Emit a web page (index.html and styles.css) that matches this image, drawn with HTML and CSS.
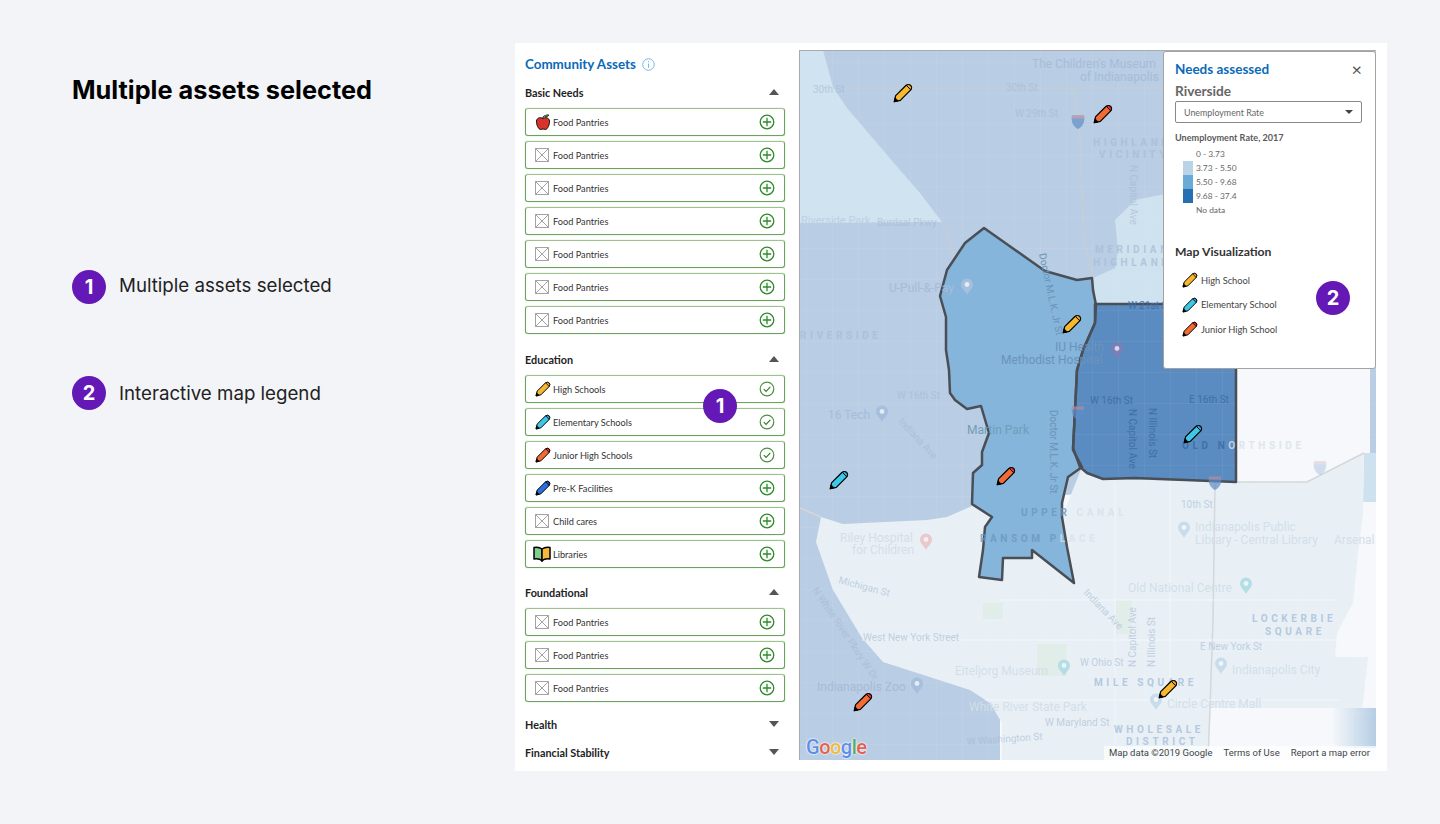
FILE: index.html
```html
<!DOCTYPE html>
<html>
<head>
	<meta charset="utf-8">
	<title>Multiple assets selected</title>
	<link rel="stylesheet" href="styles.css">
</head>
<body>

<svg class="defs" width="0" height="0">
	<symbol id="pencil" viewBox="0 0 24 24">
		<path d="M1.500 22.500 L3.200 15.200 L15.500 3 Q18.500 .8 21.300 3 Q23.300 5.800 21 8.500 L8.800 20.800 Z" fill="currentColor" stroke="#000" stroke-width="1.500" stroke-linejoin="round"/>
		<path d="M16 2.700 Q18.500 .8 21.300 3 Q23.300 5.800 21.200 8.200 Z" fill="var(--cap)" stroke="#000" stroke-width="1.200" stroke-linejoin="round"/>
		<path d="M1.500 22.500 L2.500 17.800 L6.200 21.500 Z" fill="#000" stroke="#000"/>
	</symbol>
	<symbol id="noimg" viewBox="0 0 16 16">
		<path d="M.5 1.500h13v13H.5z M.5 1.500l13 13 M13.500 1.500l-13 13" fill="#fff" stroke="#999" stroke-width=".9"/>
	</symbol>
	<symbol id="apple" viewBox="0 0 16 16">
		<path d="M8 4.500 C6 3 2 3.300 1.500 7 C1.200 10.500 3.500 15.500 5.500 15.500 C6.800 15.500 7 15 8 15 C9 15 9.200 15.500 10.500 15.500 C12.500 15.500 14.800 10.500 14.500 7 C14 3.300 10 3 8 4.500 Z" fill="#d8322c" stroke="#000" stroke-width=".9"/>
		<path d="M8 4.500 C8 3 8.500 2 9.500 1.500" fill="none" stroke="#000" stroke-width="1"/>
		<path d="M9.500 2.500 C10.500 .8 12.500 .6 14 1 C13.200 2.600 11.200 3.400 9.500 2.500 Z" fill="#4d9a3a" stroke="#000" stroke-width=".6"/>
	</symbol>
	<symbol id="book" viewBox="0 0 18 16">
		<path d="M9 3 C7 1.500 4 1 1 1.500 V13 C4 12.500 7 13 9 14.500 Z" fill="#7fce8a" stroke="#000" stroke-width="1.500" stroke-linejoin="round"/>
		<path d="M9 3 C11 1.500 14 1 17 1.500 V13 C14 12.500 11 13 9 14.500 Z" fill="#f5b83d" stroke="#000" stroke-width="1.500" stroke-linejoin="round"/>
		<path d="M7.800 14.500 L9 15.800 L10.200 14.500" fill="#000" stroke="#000" stroke-width=".8"/>
	</symbol>
	<symbol id="plus" viewBox="0 0 16 16">
		<circle cx="8" cy="8" r="6.800" fill="none" stroke="#2f8a2a" stroke-width="1.300"/>
		<path d="M8 3.800v8.400M3.800 8h8.400" fill="none" stroke="#2f8a2a" stroke-width="1.300"/>
	</symbol>
	<symbol id="check" viewBox="0 0 16 16">
		<circle cx="8" cy="8" r="6.800" fill="none" stroke="#4f8f45" stroke-width="1.200"/>
		<path d="M4.800 8.200l2.300 2.300 4.200-4.600" fill="none" stroke="#3d7a35" stroke-width="1.200"/>
	</symbol>
	<symbol id="mark" viewBox="0 0 14 18">
		<path d="M7 17 C5 13 1 10.500 1 6.500 A6 6 0 0 1 13 6.500 C13 10.500 9 13 7 17 Z" fill="currentColor"/>
		<circle cx="7" cy="6.500" r="2.400" fill="#fff" opacity=".7"/>
	</symbol>
	<symbol id="shield" viewBox="0 0 14 16">
		<path d="M1 1.500 H13 C14 7 12.500 12.500 7 15 C1.500 12.500 0 7 1 1.500 Z" fill="#5f8fc9"/>
		<path d="M1 1.500 H13 L13.300 4.500 H.7 Z" fill="#b98c9c"/>
	</symbol>
</svg>

<div class="page">

	<div class="notes">
		<h1>Multiple assets selected</h1>
		<div class="note note-first"><span class="badge">1</span><span class="note-up">Multiple assets selected</span></div>
		<div class="note"><span class="badge">2</span>Interactive map legend</div>
	</div>

	<div class="frame">

		<div class="side">
			<div class="side-title">Community Assets
				<svg class="info" viewBox="0 0 14 14"><circle cx="7" cy="7" r="6.200" fill="none" stroke="#6db0e2"/><path d="M7 3.400v1.200M7 6v4.600" stroke="#6db0e2" fill="none"/></svg>
			</div>

			<div class="sect sect-first">
				<div class="sect-head">Basic Needs <span class="caret"></span></div>
				<ul class="assets">
					<li><svg class="ico"><use href="#apple"/></svg>Food Pantries<svg class="act"><use href="#plus"/></svg></li>
					<li><svg class="ico"><use href="#noimg"/></svg>Food Pantries<svg class="act"><use href="#plus"/></svg></li>
					<li><svg class="ico"><use href="#noimg"/></svg>Food Pantries<svg class="act"><use href="#plus"/></svg></li>
					<li><svg class="ico"><use href="#noimg"/></svg>Food Pantries<svg class="act"><use href="#plus"/></svg></li>
					<li><svg class="ico"><use href="#noimg"/></svg>Food Pantries<svg class="act"><use href="#plus"/></svg></li>
					<li><svg class="ico"><use href="#noimg"/></svg>Food Pantries<svg class="act"><use href="#plus"/></svg></li>
					<li><svg class="ico"><use href="#noimg"/></svg>Food Pantries<svg class="act"><use href="#plus"/></svg></li>
				</ul>
			</div>

			<div class="sect sect-edu">
				<div class="sect-head">Education <span class="caret"></span></div>
				<ul class="assets">
					<li><svg class="ico c-yellow"><use href="#pencil"/></svg>High Schools<svg class="act"><use href="#check"/></svg></li>
					<li><svg class="ico c-cyan"><use href="#pencil"/></svg>Elementary Schools<svg class="act"><use href="#check"/></svg></li>
					<li><svg class="ico c-orange"><use href="#pencil"/></svg>Junior High Schools<svg class="act"><use href="#check"/></svg></li>
					<li><svg class="ico c-blue"><use href="#pencil"/></svg>Pre-K Facilities<svg class="act"><use href="#plus"/></svg></li>
					<li><svg class="ico"><use href="#noimg"/></svg>Child cares<svg class="act"><use href="#plus"/></svg></li>
					<li><svg class="ico ico-book"><use href="#book"/></svg>Libraries<svg class="act"><use href="#plus"/></svg></li>
				</ul>
				<span class="badge badge-over badge-assets">1</span>
			</div>

			<div class="sect sect-found">
				<div class="sect-head">Foundational <span class="caret"></span></div>
				<ul class="assets">
					<li><svg class="ico"><use href="#noimg"/></svg>Food Pantries<svg class="act"><use href="#plus"/></svg></li>
					<li><svg class="ico"><use href="#noimg"/></svg>Food Pantries<svg class="act"><use href="#plus"/></svg></li>
					<li><svg class="ico"><use href="#noimg"/></svg>Food Pantries<svg class="act"><use href="#plus"/></svg></li>
				</ul>
			</div>

			<div class="sect sect-closed">
				<div class="sect-head">Health <span class="caret caret-down"></span></div>
			</div>
			<div class="sect sect-closed">
				<div class="sect-head">Financial Stability <span class="caret caret-down"></span></div>
			</div>
		</div>

		<div class="map">
			<svg class="map-canvas" viewBox="800 51 576 709" width="576" height="709">
				<defs>
					<pattern id="streets" width="26" height="31" patternUnits="userSpaceOnUse">
						<path d="M0 0H26M0 0V31" fill="none" stroke="#fff" stroke-width="1" opacity=".1"/>
					</pattern>
					<linearGradient id="corner" x1="0" y1="0" x2="1" y2="0">
						<stop offset="0" stop-color="#f4f7fa"/>
						<stop offset="1" stop-color="#b5cde4"/>
					</linearGradient>
				</defs>

				<!-- needs areas -->
				<rect x="800" y="50" width="576" height="710" fill="#b9cde4"/>
				<polygon points="800,50 823,50 833,87 847,108 900,170 920,193 942,222 800,223" fill="#cfe3f0"/>
				<polygon points="1093,278 1115,268 1118,250 1115,220 1135,200 1170,193 1170,304 1096,304" fill="#cfe2ef"/>
				<polygon points="1236,304 1376,304 1376,760 1000,760 1000,500 1236,482" fill="#f6f8fb"/>
				<polygon points="1370,300 1376,300 1376,453 1370,453" fill="#b9cde4"/>
				<polygon points="1364,453 1376,453 1376,502 1363,502" fill="#cde1ef"/>
				<polygon points="821,517 843,524 927,520 947,517 972,506 992,517 1062,517 1082,467 1103,479 1236,482 1307,482 1364,453 1363,513 1358,553 1353,603 1337,633 1335,657 1368,657 1363,703 1353,737 1340,708 1210,708 1208,760 1002,760 1002,723 990,703 970,690 883,662 862,638 833,590 816,542" fill="#e8f0f6"/>
				<rect x="1333" y="708" width="43" height="40" fill="url(#corner)"/>
				<polygon points="1095,304 1236,304 1236,482 1135,478 1103,479 1087,473 1080,467 1073,448 1075,410 1077,370 1083,350 1095,323" fill="#5a8bc1"/>
				<polygon id="area" points="984,228 1045,271 1077,280 1092,278 1093,290 1096,305 1095,323 1083,350 1077,370 1075,410 1073,450 1082,467 1068,477 1062,503 1062,517 1067,547 1074,583 1032,550 1032,558 1003,558 1002,580 979,577 983,550 985,527 992,517 972,504 973,473 982,465 982,452 989,433 981,406 967,409 955,400 950,393 949,370 946,350 946,317 940,296 947,270 965,243" fill="#85b5da"/>

				<!-- parks and water -->
				<polygon points="967,410 981,406 989,433 982,452 982,465 973,473 972,504 985,470 1000,432 1026,432 1026,400 955,400" fill="#7fbcc4"/>
				<rect x="978" y="316" width="15" height="34" fill="#73b1dd"/>
				<rect x="981" y="566" width="20" height="11" fill="#7fbcc4"/>
				<rect x="1077" y="282" width="13" height="20" fill="#86bcc6"/>
				<rect x="1116" y="600" width="16" height="34" fill="#e0ede8"/>
				<rect x="983" y="603" width="20" height="16" fill="#e0ede8"/>
				<rect x="1037" y="644" width="30" height="32" fill="#e0ede8"/>

				<rect x="800" y="50" width="576" height="710" fill="url(#streets)"/>

				<!-- roads -->
				<path class="road" d="M842 88H1162"/>
				<path class="road" d="M1070 87 C1076 95 1079 110 1080 140 L1084 240 L1093 278"/>
				<path class="road" d="M942 222 C948 232 952 245 953 262"/>
				<path class="road-grey" d="M1215 483 L1213 620 L1210 708 L1208 760"/>
				<path class="road-grey" d="M1236 482 H1307 L1364 453"/>
				<path class="road-grey" d="M800 508 L821 517"/>
				<path class="road-pale" d="M862 640H1335M1000 600H1335M985 700H1340M1115 482V760M1170 482V700"/>

				<!-- border of selected areas -->
				<use href="#area" class="area-line"/>
				<polygon class="area-line" points="1095,304 1236,304 1236,482 1135,478 1103,479 1087,473 1080,467 1073,448 1075,410 1077,370 1083,350 1095,323"/>

				<!-- labels -->
				<text class="lab" x="1032" y="68">The Children's Museum</text>
				<text class="lab" x="1080" y="81">of Indianapolis</text>
				<text class="lab-s" x="813" y="93">30th St</text>
				<text class="lab-s" x="1006" y="91">30th St</text>
				<text class="lab-s" x="1015" y="117">W 29th St</text>
				<text class="lab-hood" x="1093" y="146">HIGHLAND</text>
				<text class="lab-hood" x="1099" y="158">VICINITY</text>
				<text class="lab-hood" x="1095" y="253">MERIDIAN</text>
				<text class="lab-hood" x="1093" y="266">HIGHLAND</text>
				<text class="lab-pk" x="801" y="224">Riverside Park</text>
				<text class="lab-s" x="877" y="226">Burdsal Pkwy</text>
				<text class="lab" x="889" y="292">U-Pull-&amp;-Pay</text>
				<text class="lab-hood" x="800" y="339">RIVERSIDE</text>
				<text class="lab-dk" x="1055" y="351">IU Health</text>
				<text class="lab-dk" x="1001" y="364">Methodist Hospital</text>
				<text class="lab-s" x="897" y="399">W 16th St</text>
				<text class="lab-on" x="1128" y="309">W 21st St</text>
				<text class="lab-on" x="1090" y="404">W 16th St</text>
				<text class="lab-on" x="1189" y="403">E 16th St</text>
				<text class="lab-s" transform="translate(1130 165) rotate(90)">N Capitol Ave</text>
				<text class="lab-on" transform="translate(1129 409) rotate(90)">N Capitol Ave</text>
				<text class="lab-on" transform="translate(1149 408) rotate(90)">N Illinois St</text>
				<text class="lab-md" transform="translate(1039 254) rotate(78)">Doctor M.L.K. Jr St</text>
				<text class="lab-md" transform="translate(1050 410) rotate(90)">Doctor M.L.K. Jr St</text>
				<text class="lab-hood" x="1182" y="449"><tspan class="t-dk">OLD N</tspan><tspan class="t-pale">ORTHSIDE</tspan></text>
				<text class="lab-hood" x="1021" y="516"><tspan class="t-mid">UPPER </tspan><tspan class="t-pale">CANAL</tspan></text>
				<text class="lab-hood" x="980" y="542"><tspan class="t-mid">RANSOM P</tspan><tspan class="t-pale">LACE</tspan></text>
				<text class="lab" x="828" y="419">16 Tech</text>
				<text class="lab-s" transform="translate(898 422) rotate(47)">Indiana Ave</text>
				<text class="lab-park" x="967" y="434">Martin Park</text>
				<text class="lab-faint" x="840" y="542">Riley Hospital</text>
				<text class="lab-faint" x="852" y="554">for Children</text>
				<text class="lab-s" transform="translate(838 583) rotate(15)">Michigan St</text>
				<text class="lab-s" x="863" y="641">West New York Street</text>
				<text class="lab-faint" x="955" y="675">Eiteljorg Museum</text>
				<text class="lab" x="817" y="691">Indianapolis Zoo</text>
				<text class="lab-faint" x="969" y="711">White River State Park</text>
				<text class="lab-s" x="1045" y="726">W Maryland St</text>
				<text class="lab-s" transform="translate(967 745) rotate(-4)">W Washington St</text>
				<text class="lab-s" transform="translate(812 590) rotate(56)">N White River Pkwy W Dr</text>
				<text class="lab-faint" x="1195" y="531">Indianapolis Public</text>
				<text class="lab-faint" x="1195" y="544">Library - Central Library</text>
				<text class="lab-faint" x="1334" y="544">Arsenal</text>
				<text class="lab-s" x="1181" y="508">10th St</text>
				<text class="lab-faint" x="1128" y="592">Old National Centre</text>
				<text class="lab-hood" x="1252" y="622">LOCKERBIE</text>
				<text class="lab-hood" x="1265" y="635">SQUARE</text>
				<text class="lab-s" x="1200" y="650">E New York St</text>
				<text class="lab-faint" x="1232" y="674">Indianapolis City</text>
				<text class="lab-s" x="1080" y="666">W Ohio St</text>
				<text class="lab-hood" x="1094" y="686">MILE SQUARE</text>
				<text class="lab-faint" x="1167" y="708">Circle Centre Mall</text>
				<text class="lab-hood" x="1114" y="733">WHOLESALE</text>
				<text class="lab-hood" x="1126" y="745">DISTRICT</text>
				<text class="lab-s" transform="translate(1136 667) rotate(-90)">N Capitol Ave</text>
				<text class="lab-s" transform="translate(1155 667) rotate(-90)">N Illinois St</text>
				<text class="lab-s" transform="translate(1083 593) rotate(46)">Indiana Ave</text>

				<!-- highway shields and places -->
				<use href="#shield" class="shield" x="1071" y="114" width="14" height="16"/>
				<use href="#shield" class="shield" x="1071" y="405" width="14" height="16"/>
				<use href="#shield" class="shield" x="1208" y="475" width="14" height="16"/>
				<use href="#shield" class="shield-pale" x="1313" y="460" width="14" height="16"/>
				<use href="#mark" class="m-blue" x="960" y="278" width="14" height="18"/>
				<use href="#mark" class="m-purple" x="1110" y="342" width="14" height="18"/>
				<use href="#mark" class="m-blue" x="875" y="405" width="14" height="18"/>
				<use href="#mark" class="m-red" x="919" y="533" width="14" height="18"/>
				<use href="#mark" class="m-teal" x="1057" y="659" width="14" height="18"/>
				<use href="#mark" class="m-blue" x="910" y="677" width="14" height="18"/>
				<use href="#mark" class="m-pale" x="1177" y="521" width="14" height="18"/>
				<use href="#mark" class="m-teal" x="1239" y="577" width="14" height="18"/>
				<use href="#mark" class="m-pale" x="1214" y="657" width="14" height="18"/>
				<use href="#mark" class="m-pale" x="1149" y="693" width="14" height="18"/>

				<!-- asset pins -->
				<use href="#pencil" class="c-yellow" x="893" y="83" width="20" height="20"/>
				<use href="#pencil" class="c-orange" x="1093" y="104" width="20" height="20"/>
				<use href="#pencil" class="c-yellow" x="1062" y="314" width="20" height="20"/>
				<use href="#pencil" class="c-cyan" x="1183" y="424" width="20" height="20"/>
				<use href="#pencil" class="c-cyan" x="829" y="470" width="20" height="20"/>
				<use href="#pencil" class="c-orange" x="996" y="466" width="20" height="20"/>
				<use href="#pencil" class="c-orange" x="853" y="692" width="20" height="20"/>
				<use href="#pencil" class="c-yellow" x="1158" y="679" width="20" height="20"/>
			</svg>

			<div class="google"><b class="g-b">G</b><b class="g-r">o</b><b class="g-y">o</b><b class="g-b">g</b><b class="g-g">l</b><b class="g-r">e</b></div>
			<div class="attrib"><span>Map data ©2019 Google</span><span>Terms of Use</span><span>Report a map error</span></div>

			<div class="legend">
				<div class="legend-head">Needs assessed <span class="close">×</span></div>
				<div class="legend-place">Riverside</div>
				<div class="select">Unemployment Rate <span class="select-caret"></span></div>
				<div class="scale-title">Unemployment Rate, 2017</div>
				<ul class="scale">
					<li><i></i>0 - 3.73</li>
					<li><i class="s1"></i>3.73 - 5.50</li>
					<li><i class="s2"></i>5.50 - 9.68</li>
					<li><i class="s3"></i>9.68 - 37.4</li>
					<li><i></i>No data</li>
				</ul>
				<div class="vis-title">Map Visualization</div>
				<ul class="vis">
					<li><svg class="vis-ico c-yellow"><use href="#pencil"/></svg>High School</li>
					<li><svg class="vis-ico c-cyan"><use href="#pencil"/></svg>Elementary School</li>
					<li><svg class="vis-ico c-orange"><use href="#pencil"/></svg>Junior High School</li>
				</ul>
				<span class="badge badge-over badge-legend">2</span>
			</div>
		</div>

	</div>
</div>

</body>
</html>
```

FILE: styles.css
```css
* {
	margin: 0;
	padding: 0;
	box-sizing: border-box;
}
body {
	background: #f3f4f8;
	font-family: "Lato", "Noto Sans", sans-serif;
	color: #333;
}
ul {
	list-style: none;
}
.defs {
	position: absolute;
}
.page {
	display: flex;
	height: 824px;
	padding-top: 43px;
}

/* left notes */
.notes {
	width: 515px;
	padding-left: 72px;
	font-family: "Inter", "Open Sans", sans-serif;
}
.notes h1 {
	margin-top: 32px;
	font-size: 25.300px;
	line-height: 30px;
	font-weight: 700;
	color: #000;
}
.note {
	display: flex;
	align-items: center;
	gap: 13px;
	height: 34px;
	margin-top: 72px;
	font-size: 18.700px;
	font-weight: 400;
	color: #222;
}
.note-first {
	margin-top: 165px;
}
.note-up {
	margin-bottom: 4px;
}
.badge {
	display: flex;
	align-items: center;
	justify-content: center;
	flex: none;
	width: 34px;
	height: 34px;
	border-radius: 50%;
	background: #6418b5;
	color: #fff;
	font: 700 20px "Inter", sans-serif;
}
.badge-over {
	position: absolute;
}
.badge-assets {
	left: 178px;
	top: 38px;
}
.badge-legend {
	left: 152px;
	top: 229px;
}

/* white frame */
.frame {
	display: flex;
	width: 872px;
	height: 728px;
	padding: 7px 11px 11px 0;
	background: #fff;
}

/* assets column */
.side {
	width: 284px;
	padding: 4px 14px 0 10px;
}
.side-title {
	display: flex;
	align-items: center;
	gap: 6px;
	height: 20px;
	margin-bottom: 10px;
	font-size: 13.400px;
	font-weight: 700;
	color: #0a6ab8;
}
.info {
	width: 13px;
	height: 13px;
}
.sect {
	position: relative;
	margin-bottom: 16px;
}
.sect-first {
	margin-bottom: 17px;
}
.sect-found {
	margin-bottom: 14px;
}
.sect-closed {
	margin-bottom: 12px;
}
.sect-head {
	display: flex;
	align-items: center;
	justify-content: space-between;
	height: 16px;
	padding-right: 6px;
	font-size: 10.800px;
	font-weight: 700;
	color: #222;
}
.assets {
	display: flex;
	flex-direction: column;
	gap: 5px;
	margin-top: 8px;
}
.assets li {
	display: flex;
	align-items: center;
	height: 28px;
	padding: 0 9px;
	border: 1px solid #6aa35c;
	border-top-color: #9dc28f;
	border-radius: 3px;
	box-shadow: 0 0 1px rgba(90, 150, 75, .8);
	font-size: 9.200px;
	color: #333;
}
.caret {
	width: 0;
	height: 0;
	border-left: 5.500px solid transparent;
	border-right: 5.500px solid transparent;
	border-bottom: 6px solid #555;
}
.caret-down {
	border-bottom: 0;
	border-top: 6px solid #555;
}
.ico {
	flex: none;
	width: 16px;
	height: 16px;
	margin-right: 2px;
}
.ico-book {
	width: 18px;
	height: 16px;
	margin: 0 2px 0 -2px;
}
.act {
	flex: none;
	width: 16px;
	height: 16px;
	margin-left: auto;
}

/* pencil colours */
.c-yellow {
	color: #f5b82e;
	--cap: #f0a92a;
}
.c-cyan {
	color: #3ec8e8;
	--cap: #35a4d8;
}
.c-orange {
	color: #f26b35;
	--cap: #e5303a;
}
.c-blue {
	color: #2a6fdb;
	--cap: #2458b8;
}

/* map */
.map {
	position: relative;
	width: 577px;
	height: 710px;
	border-top: 1px solid #aaa;
	border-left: 1px solid #aaa;
	overflow: hidden;
}
.map-canvas {
	display: block;
}
.road {
	fill: none;
	stroke: #d9cfc4;
	stroke-width: 1.500;
	opacity: .45;
}
.road-grey {
	fill: none;
	stroke: #d5d7d8;
	stroke-width: 1.500;
}
.road-pale {
	fill: none;
	stroke: #f2f6f9;
	stroke-width: 2;
	opacity: .5;
}
.area-line {
	fill: none;
	stroke: #4a4f57;
	stroke-width: 2.500;
	stroke-linejoin: round;
}
.shield {
	opacity: .7;
}
.shield-pale {
	opacity: .25;
}
.map-canvas text {
	font-family: "Roboto", "Liberation Sans", sans-serif;
}
.lab {
	font-size: 12px;
	fill: #a6bcd8;
}
.lab-s {
	font-size: 10px;
	fill: #a6b9d2;
	opacity: .6;
}
.lab-faint {
	font-size: 12px;
	fill: #d3dfe8;
}
.lab-pk {
	font-size: 11px;
	fill: #bcd0e2;
}
.lab-dk {
	font-size: 12px;
	fill: #6a93bc;
}
.lab-md {
	font-size: 10px;
	fill: #6d93b8;
}
.lab-park {
	font-size: 12px;
	fill: #6e9fb8;
}
.lab-on {
	font-size: 10px;
	fill: #3f70a8;
}
.lab-hood {
	font-size: 10px;
	font-weight: 700;
	letter-spacing: 3.600px;
	fill: #a9bfd9;
	opacity: .8;
}
.t-dk {
	fill: #3a6ba3;
}
.t-mid {
	fill: #6d97bf;
}
.t-pale {
	fill: #d9e2ea;
}
.m-blue {
	color: #a5bfdc;
}
.m-purple {
	color: #7a7fb8;
}
.m-red {
	color: #e9c9cc;
}
.m-teal {
	color: #b5dde5;
}
.m-pale {
	color: #c8dcea;
}
.google {
	position: absolute;
	left: 6px;
	bottom: 1px;
	font: 20px "Roboto", sans-serif;
	letter-spacing: -.5px;
	text-shadow: 0 0 2px #fff, 0 0 2px #fff;
}
.google b {
	font-weight: 500;
}
.g-b {
	color: #5f8ee8;
}
.g-r {
	color: #e5604f;
}
.g-y {
	color: #f0bb3c;
}
.g-g {
	color: #55ab63;
}
.attrib {
	position: absolute;
	right: 0;
	bottom: 0;
	display: flex;
	gap: 11px;
	padding: 0 6px 0 5px;
	height: 14px;
	background: rgba(255, 255, 255, .7);
	font: 9.500px/14px "Roboto", sans-serif;
	color: #444;
}

/* legend */
.legend {
	position: absolute;
	left: 363px;
	top: 0;
	width: 213px;
	height: 318px;
	padding: 8px 13px 0 11px;
	background: #fff;
	border: 1px solid #a3a3a3;
	border-radius: 3px;
}
.legend-head {
	display: flex;
	align-items: center;
	justify-content: space-between;
	height: 18px;
	font-size: 13.500px;
	font-weight: 700;
	color: #0a6ab8;
}
.close {
	font-size: 18px;
	font-weight: 400;
	color: #555;
}
.legend-place {
	height: 19px;
	margin-top: 4px;
	font-size: 13.700px;
	font-weight: 700;
	color: #666;
}
.select {
	display: flex;
	align-items: center;
	justify-content: space-between;
	height: 22px;
	padding: 0 8px;
	border: 1px solid #888;
	border-radius: 2px;
	font-size: 8.900px;
	color: #666;
}
.select-caret {
	width: 0;
	height: 0;
	border-left: 4px solid transparent;
	border-right: 4px solid transparent;
	border-top: 4px solid #444;
}
.scale-title {
	margin-top: 8px;
	height: 14px;
	line-height: 14px;
	font-size: 9.100px;
	font-weight: 700;
	color: #5a5a5a;
}
.scale {
	margin-top: 2px;
}
.scale li {
	display: flex;
	align-items: center;
	height: 14px;
	font-size: 8.400px;
	color: #666;
	padding-left: 8px;
}
.scale i {
	display: block;
	width: 10px;
	height: 14px;
	margin-right: 3px;
}
.scale .s1 {
	background: #b8d4e6;
}
.scale .s2 {
	background: #6aabd6;
}
.scale .s3 {
	background: #2370b3;
}
.vis-title {
	margin-top: 27px;
	height: 16px;
	line-height: 16px;
	font-size: 12.200px;
	font-weight: 700;
	color: #333;
}
.vis {
	margin-top: 8px;
}
.vis li {
	display: flex;
	align-items: center;
	height: 24.500px;
	padding-left: 7px;
	font-size: 9.300px;
	color: #444;
}
.vis-ico {
	width: 16px;
	height: 16px;
	margin-right: 3px;
}
```
